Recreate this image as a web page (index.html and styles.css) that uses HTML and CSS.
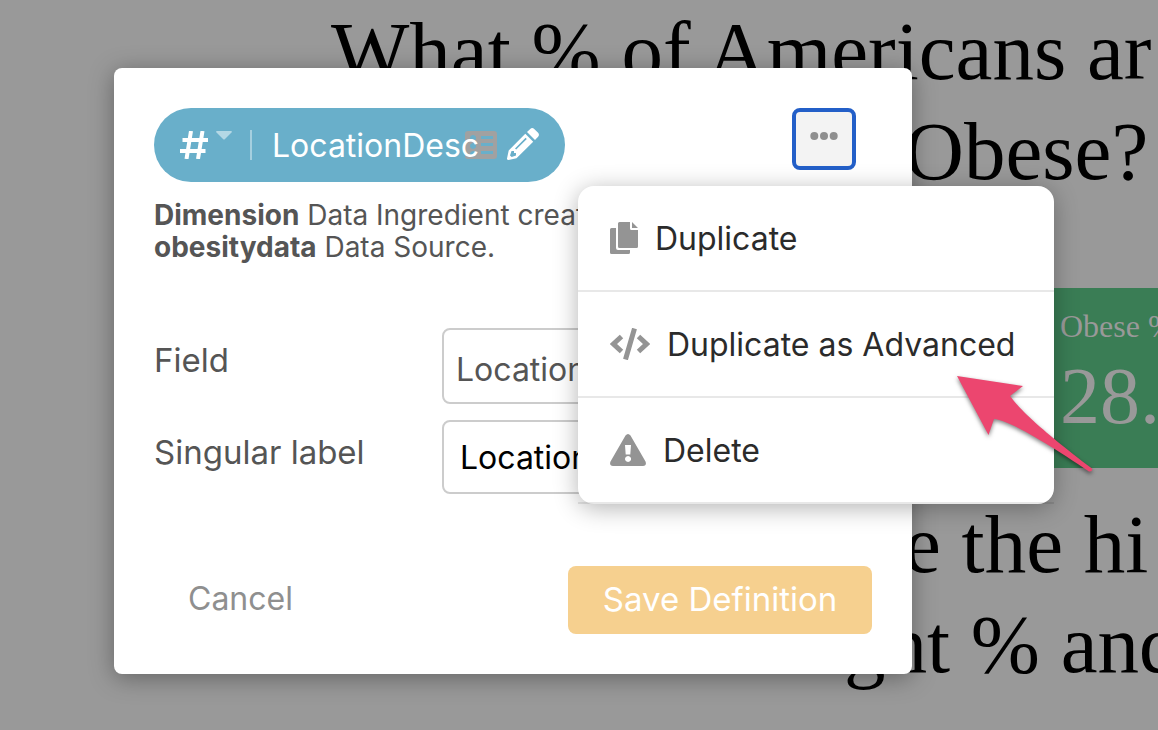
FILE: index.html
```html
<!DOCTYPE html>
<html lang="en">
<head>
<meta charset="utf-8">
<title>Ingredient definition</title>
<link rel="stylesheet" href="styles.css">
</head>
<body>
<main class="report">
  <h1 class="headline headline-top">
    <span class="line line-what">What % of Americans ar</span>
    <span class="line line-obese">Obese?</span>
  </h1>
  <section class="stat">
    <div class="stat-label">Obese %</div>
    <div class="stat-value">28.</div>
  </section>
  <h2 class="headline">
    <span class="line line-the">e the hi</span>
    <span class="line line-and">ght % and</span>
  </h2>
</main>
<div class="overlay">
  <form class="dialog" role="dialog" aria-label="Edit ingredient">
    <div class="top">
      <div class="chip">
        <svg class="hash" viewBox="0 0 28 28" width="28" height="28"><path d="M11 0 6.500 28M22.500 0 18 28M2.500 9H28M0 20H25.500" fill="none" stroke="#fff" stroke-width="4"/></svg>
        <svg class="caret" viewBox="0 0 16 9" width="16" height="9"><path d="M1 0h14q1.500 0 .5 1.500L9 8q-1 1-2 0L.5 1.500Q-.5 0 1 0z" fill="#b4d8e5"/></svg>
        <span class="divider"></span>
        <span class="chip-name">LocationDesc</span>
        <svg class="list" viewBox="0 0 32 28" width="32" height="28"><path fill="#a1a1a1" fill-rule="evenodd" d="M3 0h26q3 0 3 3v22q0 3-3 3H3q-3 0-3-3V3q0-3 3-3zM16 5v3h12V5zm0 7v3h12v-3zm0 8v3h12v-3zM8 4a3 3 0 1 0 .1 0zm0 8a3 3 0 1 0 .1 0zm0 8a3 3 0 1 0 .1 0z"/></svg>
        <svg class="pencil" viewBox="0 0 32 32" width="32" height="32"><path fill="#fff" fill-rule="evenodd" d="M18.300 5.800 26.200 13.700 9.500 30.300 1.500 32Q-.2 32 0 30.400L1.700 22.500zM20 4 23.200.9q2-1.700 4 0l3.900 3.900q1.700 2 0 4L28 12zM18.600 9.800 8 20.400 9.200 21.600 19.800 11zM4.500 23 3 27.500 4.700 29 9 27.500V25H7v-2z"/></svg>
      </div>
      <button type="button" class="more" aria-label="More actions">
        <svg viewBox="0 0 28 8" width="28" height="8"><g fill="#8f8f8f"><circle cx="4.300" cy="4" r="4"/><circle cx="14" cy="4" r="4"/><circle cx="23.700" cy="4" r="4"/></g></svg>
      </button>
    </div>
    <p class="about"><b>Dimension</b> Data Ingredient created from<br><b>obesitydata</b> Data Source.</p>
    <div class="fields">
      <label for="field">Field</label>
      <select id="field" class="control"><option>LocationDesc</option></select>
      <label for="singular">Singular label</label>
      <input id="singular" class="control control-text" type="text" value="LocationDesc">
    </div>
    <div class="actions">
      <button type="button" class="cancel">Cancel</button>
      <button type="submit" class="save">Save Definition</button>
    </div>
    <div class="menu" role="menu">
      <button type="button" class="item" role="menuitem">
        <svg viewBox="0 0 28 32" width="28" height="32"><path fill="#949494" d="M8 1.500Q8 0 9.500 0H20v6.500Q20 8 21.500 8H28v16.500q0 1.500-1.500 1.500h-17Q8 26 8 24.500zM22 0l6 6h-6zM6 6v20q0 2 2 2h12v2.500q0 1.500-1.500 1.500h-17Q0 32 0 30.500v-23Q0 6 1.500 6z"/></svg>
        Duplicate
      </button>
      <button type="button" class="item" role="menuitem">
        <svg viewBox="0 0 40 32" width="40" height="32"><path fill="none" stroke="#949494" stroke-width="5" d="M11.500 8.500 3.500 16l8 7.500M28.500 8.500l8 7.500-8 7.500M24.500.5l-9 31"/></svg>
        Duplicate as Advanced
      </button>
      <button type="button" class="item" role="menuitem">
        <svg viewBox="0 0 36 32" width="36" height="32"><path fill="#949494" fill-rule="evenodd" d="M15.500 1.500q2.500-3 5 0L35.500 27.500q1.500 4-2.500 4.500H3q-4-.5-2.500-4.500zM15 11l.7 9.500h4.600L21 11zM18 22a3 3 0 1 0 .1 0z"/></svg>
        Delete
      </button>
    </div>
  </form>
</div>
<svg class="pointer" viewBox="0 0 140 100" width="140" height="100"><path fill="#ec466f" d="M2 1 68 11 55 21C65 34 80 50 137 93.500Q138 97 134 96.500C95 70 52 44 39 44L33.500 60z"/></svg>
</body>
</html>
```
FILE: styles.css
```css
* { box-sizing: border-box; }
body {
  margin: 0;
  min-height: 100vh;
  position: relative;
  overflow: hidden;
  background: #999;
  font-family: Inter, "Liberation Sans", sans-serif;
}
button, input, select { font: inherit; }
svg { flex: none; display: block; }

.report {
  height: 100vh;
  overflow: hidden;
  font-family: "Liberation Serif", serif;
  color: #000;
}
.headline { margin: 0; font-size: 83px; font-weight: 400; line-height: 100px; }
.line { display: block; white-space: nowrap; }
.line-what { padding-left: 331px; }
.line-obese { padding-left: 904px; }
.line-the { padding-left: 904px; }
.line-and { padding-left: 844px; }
.headline-top { padding-top: 1px; }
.stat {
  height: 180px;
  margin: 87px 0 26px 1036px;
  padding: 20px 0 0 24px;
  background: #3a7d55;
  color: #999;
  white-space: nowrap;
}
.stat-label { font-size: 32px; line-height: 36px; }
.stat-value { font-size: 80px; line-height: 104px; }

.overlay { position: absolute; inset: 0; padding: 68px 246px 0 114px; }
.dialog {
  position: relative;
  padding: 40px;
  border-radius: 8px;
  background: #fff;
  box-shadow: 0 4px 24px rgba(0, 0, 0, .35);
  color: #555;
  font-size: 32px;
}
.top { display: flex; justify-content: space-between; align-items: flex-start; padding-right: 16px; }
.chip {
  display: flex;
  align-items: center;
  height: 74px;
  padding: 0 26px;
  border-radius: 37px;
  background: #69afca;
  color: #fff;
}
.caret { margin: 0 0 20px 8px; }
.divider { width: 2px; height: 30px; margin: 0 20px 0 18px; background: #a5cfdf; }
.chip-name { position: relative; z-index: 1; }
.list { margin-left: -14px; }
.pencil { margin: 0 0 2px 10px; }
.more {
  display: flex;
  justify-content: center;
  width: 64px;
  height: 62px;
  padding: 20px 0 0;
  border: 4px solid #235fc8;
  border-radius: 8px;
  background: #f3f3f3;
}
.about { margin: 17px 0 0; font-size: 28px; line-height: 32px; white-space: nowrap; }
.fields {
  display: grid;
  grid-template-columns: 272px 1fr;
  gap: 16px;
  margin-top: 65px;
}
.fields label { font-size: 33px; line-height: 64px; }
.control {
  width: 100%;
  height: 76px;
  padding: 6px 12px 0;
  border: 2px solid #ccc;
  border-radius: 8px;
  background: #fff;
  color: #555;
  appearance: none;
}
.control-text { height: 74px; padding: 0 16px; color: #000; }
.actions { display: flex; justify-content: space-between; margin-top: 72px; }
.actions button { height: 68px; padding-bottom: 4px; border: 0; border-radius: 8px; }
.actions .cancel { padding: 0 34px 4px; background: none; color: #8f8f8f; }
.actions .save { min-width: 304px; font-size: 33px; background: #f6d08f; color: #fff; }

.menu {
  position: absolute;
  top: 118px;
  right: -142px;
  min-width: 476px;
  border-radius: 16px;
  background: #fff;
  box-shadow: 0 4px 24px rgba(0, 0, 0, .3);
}
.item {
  display: flex;
  align-items: center;
  gap: 17px;
  width: 100%;
  height: 106px;
  padding: 0 32px;
  border: 0;
  border-bottom: 2px solid rgba(0, 0, 0, .09);
  background: none;
  color: #2b2b2b;
  white-space: nowrap;
}
.pointer {
  position: absolute;
  top: 375px;
  left: 955px;
  filter: drop-shadow(0 2px 2px rgba(0, 0, 0, .5));
}
```
